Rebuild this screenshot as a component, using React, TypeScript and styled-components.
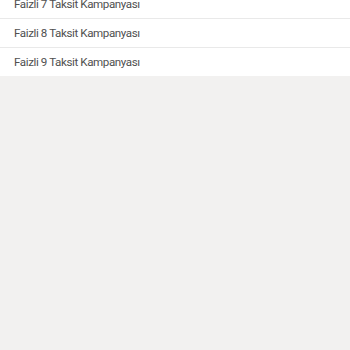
import * as React from 'react'
import styled, { createGlobalStyle } from 'styled-components'

const GlobalStyle = createGlobalStyle`
  html, body {
    margin: 0;
    padding: 0;
    background: #f2f1f0;
    font-family: Roboto, "Noto Sans", Arial, sans-serif;
  }
`

const Page = styled.div`
  height: 350px;
  overflow: hidden;
`

const List = styled.ul`
  list-style: none;
  margin: -10px 0 0;
  padding: 0;
  background: #ffffff;
`

const Item = styled.li`
  display: flex;
  align-items: center;
  height: 28px;
  padding: 0 14px;
  font-size: 11.6px;
  letter-spacing: -0.4px;
  color: #505050;
  border-bottom: 1px solid #e9e9e9;

  &:last-child {
    border-bottom: none;
  }
`

const campaigns = [7, 8, 9]

export default function App() {
  return (
    <Page>
      <GlobalStyle />
      <List>
        {campaigns.map((n) => (
          <Item key={n}>{`Faizli ${n} Taksit Kampanyası`}</Item>
        ))}
      </List>
    </Page>
  )
}
